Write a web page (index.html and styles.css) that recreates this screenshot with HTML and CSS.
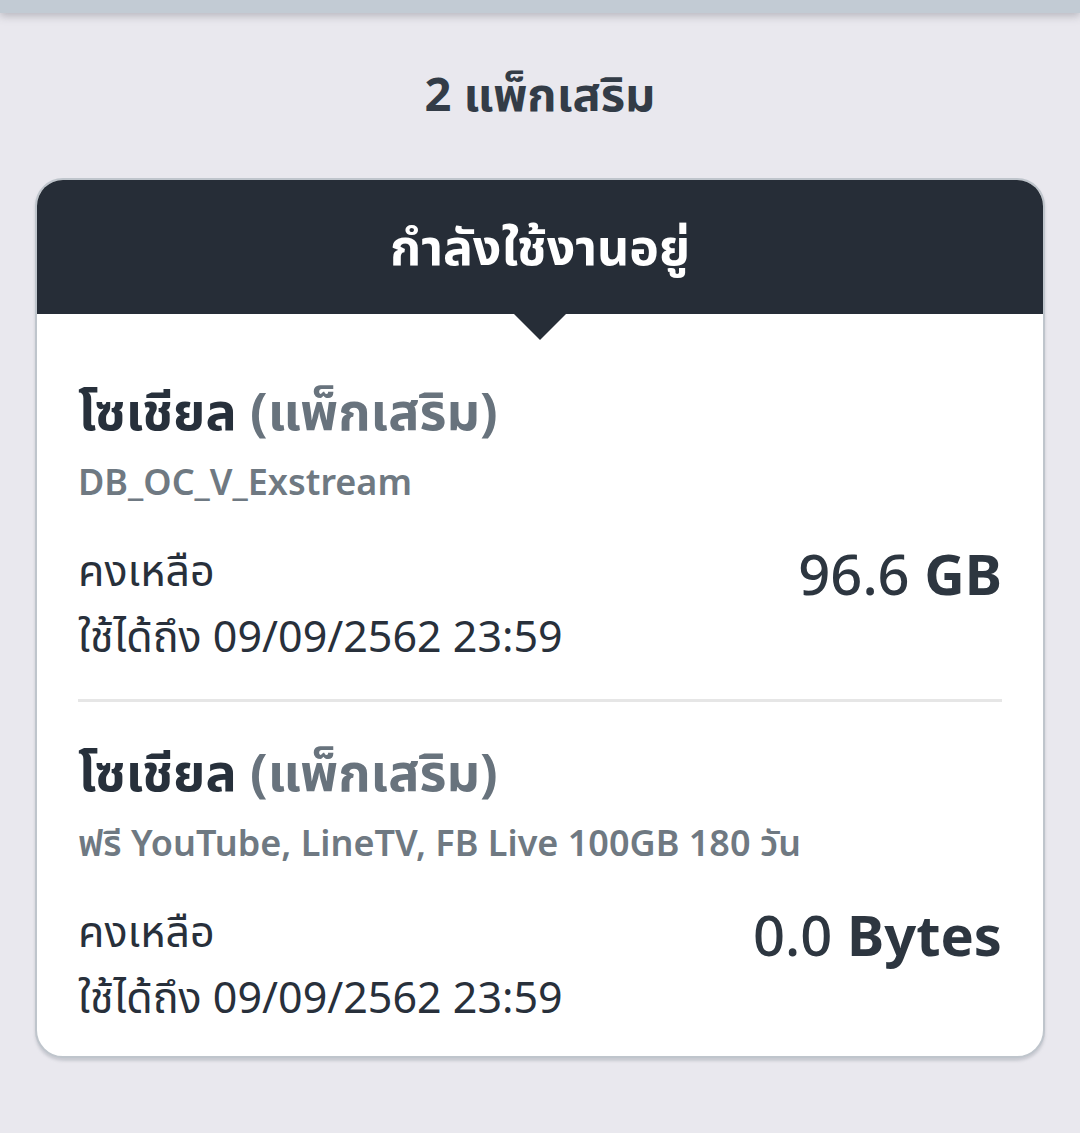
FILE: index.html
```html
<!DOCTYPE html>
<html lang="th">
<head>
<meta charset="UTF-8" />
<meta name="viewport" content="width=device-width, initial-scale=1" />
<title>แพ็กเสริม</title>
<link rel="stylesheet" href="styles.css">
</head>
<body>
<div class="topbar"></div>
<h1 class="count">2 แพ็กเสริม</h1>

<div class="card">
  <div class="card-head">กำลังใช้งานอยู่</div>

  <div class="pack">
    <div class="pack-name">โซเชียล <span class="pack-type">(แพ็กเสริม)</span></div>
    <div class="pack-code">DB_OC_V_Exstream</div>
    <div class="pack-row">
      <div class="pack-info">
        <div>คงเหลือ</div>
        <div>ใช้ได้ถึง 09/09/2562 23:59</div>
      </div>
      <div class="pack-left">96.6 <b>GB</b></div>
    </div>
  </div>

  <div class="pack">
    <div class="pack-name">โซเชียล <span class="pack-type">(แพ็กเสริม)</span></div>
    <div class="pack-code">ฟรี YouTube, LineTV, FB Live 100GB 180 วัน</div>
    <div class="pack-row">
      <div class="pack-info">
        <div>คงเหลือ</div>
        <div>ใช้ได้ถึง 09/09/2562 23:59</div>
      </div>
      <div class="pack-left">0.0 <b>Bytes</b></div>
    </div>
  </div>
</div>
</body>
</html>
```

FILE: styles.css
```css
* {
  box-sizing: border-box;
}
body {
  margin: 0;
  background: #e9e8ee;
  color: #28303b;
  font-family: "Noto Sans", "Noto Sans Thai", "DejaVu Sans", sans-serif;
  height: 1133px;
}
.topbar {
  height: 13px;
  background: #c2cbd4;
  box-shadow: 0 3px 8px rgba(90, 90, 100, 0.35);
}
.count {
  margin: 48px 0 0;
  text-align: center;
  font-size: 47px;
  line-height: 64px;
  font-weight: 700;
  color: #333c47;
}
.card {
  margin: 53px 35px 0;
  background: #fff;
  border: 2px solid #bfc5cc;
  border-radius: 28px;
  overflow: hidden;
  box-shadow: 0 3px 3px rgba(150, 155, 165, 0.4);
}
.card-head {
  position: relative;
  height: 134px;
  background: #262d37;
  color: #fff;
  font-size: 50px;
  font-weight: 700;
  text-align: center;
  line-height: 132px;
}
.card-head::after {
  content: "";
  position: absolute;
  left: 50%;
  bottom: -26px;
  margin-left: -26px;
  border-left: 26px solid transparent;
  border-right: 26px solid transparent;
  border-top: 26px solid #262d37;
}
.pack {
  margin: 0 41px;
  padding: 64px 0 30px;
}
.pack + .pack {
  border-top: 3px solid #e6e6e6;
  padding-top: 37px;
  padding-bottom: 26px;
}
.pack-name {
  font-size: 52px;
  font-weight: 700;
  line-height: 64px;
  color: #27303b;
}
.pack-type {
  color: #68737d;
}
.pack-code {
  margin-top: 16px;
  font-size: 36px;
  font-weight: 600;
  line-height: 48px;
  color: #6f7982;
}
.pack-row {
  display: flex;
  justify-content: space-between;
  align-items: flex-start;
  margin-top: 31px;
}
.pack-info {
  font-size: 43px;
  line-height: 66px;
  color: #28303b;
}
.pack-left {
  font-size: 56px;
  line-height: 72px;
  font-weight: 500;
  color: #2d3640;
}
.pack-left b {
  font-weight: 700;
}
```
